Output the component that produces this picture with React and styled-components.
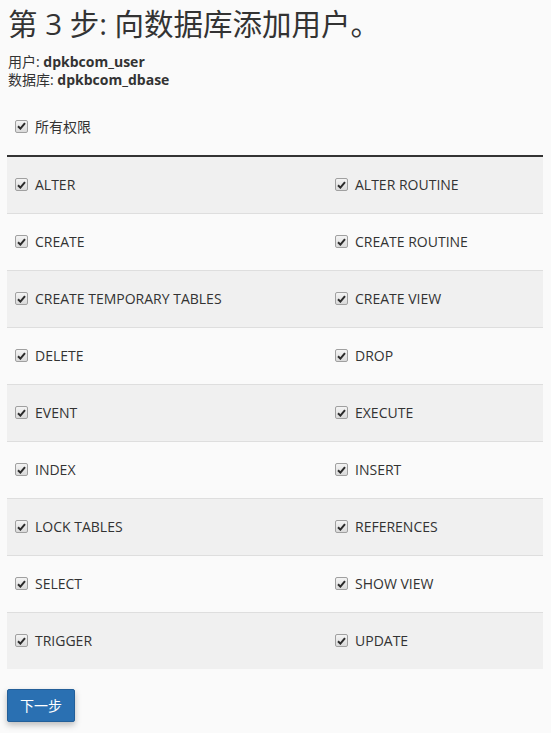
import React from "react";
import styled, { createGlobalStyle } from "styled-components";

const GlobalStyle = createGlobalStyle`
  html, body {
    margin: 0;
    padding: 0;
    background: #fafafa;
  }
  body {
    font-family: "Open Sans", "Noto Sans CJK SC", sans-serif;
    font-size: 14px;
    color: #333;
  }
`;

const Page = styled.div`
  padding: 4px 8px 10px 7px;
`;

const Title = styled.h1`
  margin: 0 0 0 1px;
  font-size: 29.5px;
  font-weight: 400;
  line-height: 40px;
  color: #333;
`;

const Info = styled.div`
  margin: 9px 0 0 1px;
  line-height: 18px;
  font-size: 14px;
`;

const InfoValue = styled.strong`
  font-weight: 700;
`;

const AllRow = styled.label`
  display: flex;
  align-items: center;
  gap: 7px;
  padding: 0 8px;
  height: 20px;
  margin-top: 27px;
`;

const Table = styled.div`
  display: grid;
  grid-template-columns: 320px 1fr;
  margin-top: 19px;
  border-top: 2px solid #333;
`;

const Cell = styled.label`
  display: flex;
  align-items: center;
  gap: 7px;
  height: 55px;
  padding: 0 8px 1px;
  background: ${(p) => (p.$odd ? "#f0f0f0" : "#fafafa")};
  border-top: ${(p) => (p.$first ? "none" : "1px solid #dedede")};
  font-size: 14px;
  color: #333;
`;

const Box = styled.span`
  flex: none;
  width: 11px;
  height: 11px;
  border: 1px solid #a0a0a0;
  border-radius: 2px;
  background: linear-gradient(#f4f4f4, #dadada);
  display: flex;
  align-items: center;
  justify-content: center;
`;

const Button = styled.button`
  margin-top: 20px;
  font-family: "Open Sans", "Noto Sans CJK SC", sans-serif;
  font-size: 14px;
  line-height: 19px;
  color: #fff;
  background: #2a70b2;
  border: 1px solid #235f99;
  border-radius: 2px;
  padding: 6px 12px;
  box-shadow: 0 3px 6px rgba(0, 0, 0, 0.25);
`;

const Checkbox = () => (
  <Box>
    <svg width="9" height="8" viewBox="0 0 9 8">
      <path d="M1 4.2 L3.4 6.6 L8 1.2" fill="none" stroke="#2b2b2b" strokeWidth="2" />
    </svg>
  </Box>
);

const privileges = [
  ["ALTER", "ALTER ROUTINE"],
  ["CREATE", "CREATE ROUTINE"],
  ["CREATE TEMPORARY TABLES", "CREATE VIEW"],
  ["DELETE", "DROP"],
  ["EVENT", "EXECUTE"],
  ["INDEX", "INSERT"],
  ["LOCK TABLES", "REFERENCES"],
  ["SELECT", "SHOW VIEW"],
  ["TRIGGER", "UPDATE"],
];

export default function App() {
  return (
    <Page>
      <GlobalStyle />
      <Title>第 3 步: 向数据库添加用户。</Title>
      <Info>
        <div>用户: <InfoValue>dpkbcom_user</InfoValue></div>
        <div>数据库: <InfoValue>dpkbcom_dbase</InfoValue></div>
      </Info>
      <AllRow>
        <Checkbox />
        所有权限
      </AllRow>
      <Table>
        {privileges.map((pair, i) =>
          pair.map((name) => (
            <Cell key={name} $odd={i % 2 === 0} $first={i === 0}>
              <Checkbox />
              {name}
            </Cell>
          ))
        )}
      </Table>
      <Button>下一步</Button>
    </Page>
  );
}
